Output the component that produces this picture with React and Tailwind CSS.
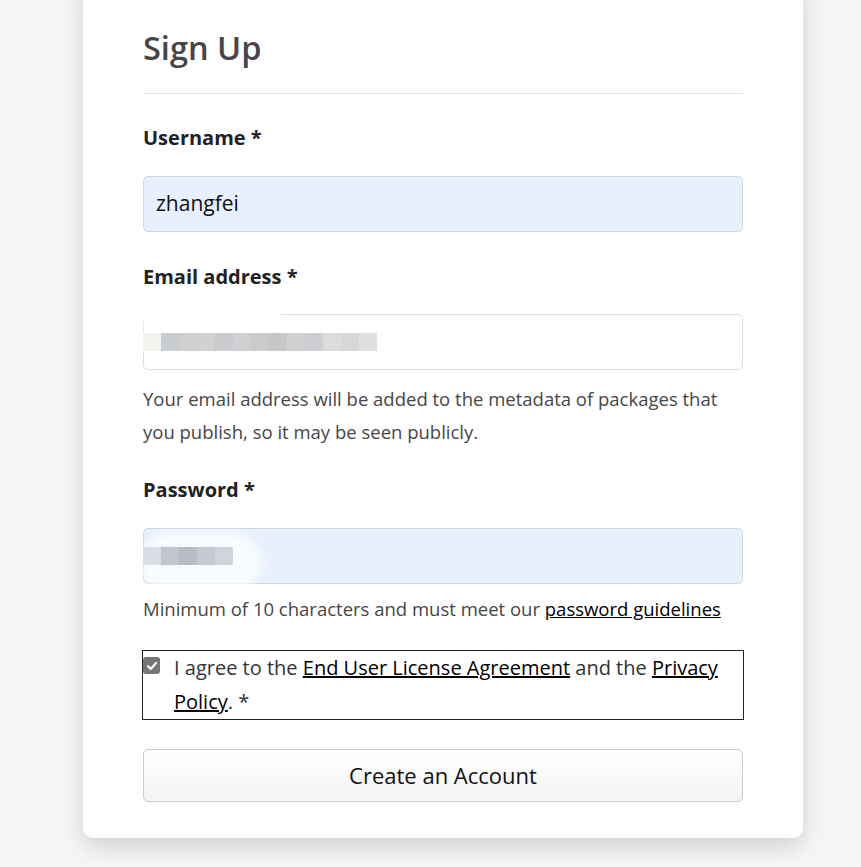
import React from "react";

const emailBlocks = ["#f4f3ef","#c9ccd1","#cdd0cd","#d2d1cf","#c9cbce","#cfd0d4","#cccbc9","#c7c7c6","#cfd0d2","#ccced3","#dcdcdb","#d6d7d9","#e0e0e0"];
const pwBlocks = ["#dadde6","#c2c5cf","#b9bcc6","#c6c9d2","#d1d4dc"];

export default function App() {
  const font = { fontFamily: "'Open Sans', 'Noto Sans', sans-serif" };
  return (
    <div className="min-h-[867px] w-[861px] bg-[#f6f6f6] overflow-hidden" style={font}>
      <div className="ml-[83px] w-[720px] -mt-[20px] bg-white rounded-[10px] shadow-[0_8px_24px_rgba(0,0,0,0.16)] px-[60px] pt-[44px] pb-[36px]">
        <h1 className="h-[48px] leading-[48px] text-[32.5px] font-semibold text-[#464646]">Sign Up</h1>
        <div className="mt-[21px] h-px bg-[#e3e3e3]" />

        <div className="mt-[29px] h-[30px] leading-[30px] text-[20px] font-bold text-[#222]">Username *</div>
        <div className="mt-[23px] h-[56px] rounded-[5px] border border-[#cfd6e0] bg-[#e8f0fe] px-[12px] flex items-center text-[21px] text-[#111]">zhangfei</div>

        <div className="mt-[30px] h-[30px] leading-[30px] text-[20px] font-bold text-[#222]">Email address *</div>
        <div className="relative mt-[22px] h-[56px] rounded-[5px] border border-[#dedede] bg-white flex items-center">
          <div className="absolute -left-[3px] -top-[8px] w-[140px] h-[22px] rounded-full bg-white blur-[3px]" />
          <div className="relative flex -ml-px">
            {emailBlocks.map((c, i) => (
              <div key={i} className="w-[18px] h-[18px]" style={{ background: c }} />
            ))}
          </div>
        </div>
        <p className="mt-[12px] text-[18.5px] leading-[33px] text-[#464646]">
          Your email address will be added to the metadata of packages that you publish, so it may be seen publicly.
        </p>

        <div className="mt-[27px] h-[30px] leading-[30px] text-[20px] font-bold text-[#222]">Password *</div>
        <div className="relative mt-[23px] h-[56px] rounded-[5px] border border-[#cfd6e0] bg-[#e8f0fe] flex items-center">
          <div className="absolute -left-[4px] top-[4px] w-[122px] h-[60px] rounded-[40px] bg-white/70 blur-[4px]" />
          <div className="relative flex -ml-px">
            {pwBlocks.map((c, i) => (
              <div key={i} className="w-[18px] h-[18px]" style={{ background: c }} />
            ))}
          </div>
        </div>
        <p className="mt-[8px] text-[18.5px] leading-[33px] text-[#464646] whitespace-nowrap">
          Minimum of 10 characters and must meet our <span className="underline text-black">password guidelines</span>
        </p>

        <div className="mt-[26px] shadow-[0_0_0_1px_#222] flex items-start">
          <div className="mt-[6px] w-[17px] h-[17px] rounded-[3px] bg-[#767676] flex items-center justify-center shrink-0">
            <svg width="12" height="12" viewBox="0 0 12 12"><path d="M2 6.2 L4.8 9 L10 3" fill="none" stroke="white" strokeWidth="2.2" strokeLinecap="round" strokeLinejoin="round"/></svg>
          </div>
          <div className="ml-[14px] text-[20px] leading-[34px] text-[#333]">
            I agree to the <span className="underline text-black">End User License Agreement</span> and the <span className="underline text-black">Privacy Policy</span>. *
          </div>
        </div>

        <button className="mt-[30px] w-full h-[53px] rounded-[5px] border border-[#cccccc] bg-gradient-to-b from-white to-[#f3f3f3] text-[22px] text-[#111]">Create an Account</button>
      </div>
    </div>
  );
}
